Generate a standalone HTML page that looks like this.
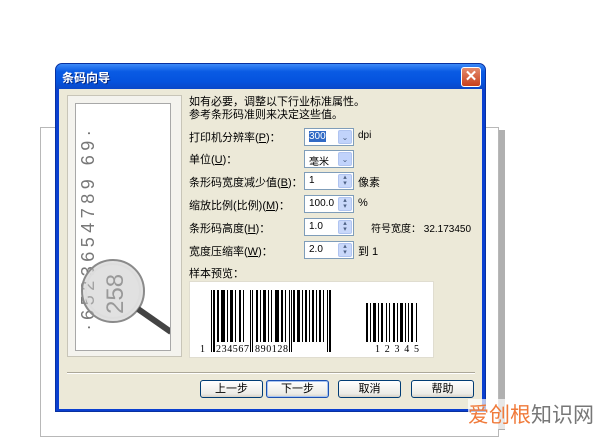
<!DOCTYPE html>
<html><head><meta charset="utf-8"><style>
*{margin:0;padding:0;box-sizing:border-box}
body{width:600px;height:424px;background:#fff;position:relative;overflow:hidden;font-family:"Liberation Sans","Noto Sans CJK SC",sans-serif;font-size:11px;color:#000}
.a{position:absolute}
.bgrect{left:40px;top:127px;width:459px;height:310px;border:1px solid #b8b8b8;background:#fff}
.shadow{left:499px;top:130px;width:6px;height:300px;background:#b0b0b0}
.dlg{left:55px;top:63px;width:431px;height:349px;background:#0a3fd0;border-radius:7px 7px 0 0;border:1px solid #0831a0}
.title{left:0;top:0;width:429px;height:25px;border-radius:6px 6px 0 0;background:linear-gradient(#3d8af7,#0a5be4 30%,#0553de 70%,#0a48c8);color:#fff;font-weight:bold;font-size:12px;padding:5px 0 0 6px;text-shadow:1px 1px #0a2a80}
.close{left:405px;top:3px;width:20px;height:20px;border:1px solid #fff;border-radius:3px;background:linear-gradient(#e48a6c,#c8401c);color:#fff;font-size:15px;line-height:17px;text-align:center;font-weight:bold}
.body{left:3px;top:25px;width:423px;height:320px;background:#ece9d8}
.lbl{position:absolute;font-size:11px;white-space:nowrap}
.inp{position:absolute;left:245px;width:50px;height:18px;border:1px solid #7f9db9;background:#fff;font-size:10px;padding:2px 0 0 4px}
.dd{position:absolute;right:1px;top:1px;width:14px;height:14px;background:#c1d3fb;border:1px solid #b0c4f0;border-radius:2px;color:#4d6185;font-size:8px;text-align:center;line-height:13px}
.sp{position:absolute;right:1px;top:1px;width:14px;height:14px;background:#c9d8fa;border:1px solid #b0c4f0;border-radius:2px;color:#4d6185;font-size:7px;text-align:center;line-height:6px}
.btn{position:absolute;top:291px;width:63px;height:18px;border:1px solid #003c74;border-radius:3px;background:linear-gradient(#fff,#ecebe6 80%,#d6d0c5);text-align:center;font-size:11px;line-height:16px}
</style></head><body>
<div class="a bgrect"></div>
<div class="a shadow"></div>
<div class="a dlg">
 <div class="a title">条码向导</div>
 <div class="a close">✕</div>
 <div class="a body">
  <div class="a" style="left:8px;top:6px;width:115px;height:262px;border:1px solid #c8c5b8;background:#f4f3ee"></div>
  <div class="a" style="left:16px;top:14px;width:96px;height:248px;border:1px solid #a8a8a8;background:#fff;overflow:hidden">
   <div class="a" style="left:-112px;top:113px;width:250px;height:22px;transform:rotate(-90deg);font-size:18px;color:#777;letter-spacing:4.5px;font-family:'Liberation Sans',sans-serif;text-align:center">·6523654789 69·</div>
   <svg class="a" style="left:0;top:0" width="96" height="248">
    <circle cx="37" cy="187" r="31" fill="rgba(200,200,200,0.55)" stroke="#8a8a8a" stroke-width="2"/>
    <circle cx="37" cy="187" r="27" fill="none" stroke="#ddd" stroke-width="2"/>
    <line x1="62" y1="205" x2="95" y2="228" stroke="#444" stroke-width="6"/>
    <text x="47" y="210" transform="rotate(-90 47 210)" font-size="24" fill="#999" font-family="Liberation Sans">258</text>
   </svg>
  </div>
  <div class="lbl" style="left:130px;top:7px;line-height:13px">如有必要，调整以下行业标准属性。<br>参考条形码准则来决定这些值。</div>
  <div class="lbl" style="left:130px;top:40px">打印机分辨率(<u>P</u>)：</div>
  <div class="lbl" style="left:130px;top:62px">单位(<u>U</u>)：</div>
  <div class="lbl" style="left:130px;top:85px">条形码宽度减少值(<u>B</u>)：</div>
  <div class="lbl" style="left:130px;top:108px">缩放比例(比例)(<u>M</u>)：</div>
  <div class="lbl" style="left:130px;top:131px">条形码高度(<u>H</u>)：</div>
  <div class="lbl" style="left:130px;top:154px">宽度压缩率(<u>W</u>)：</div>
  <div class="lbl" style="left:130px;top:176px">样本预览：</div>
  <div class="inp" style="top:39px"><span style="background:#316ac5;color:#fff">300</span><div class="dd">⌄</div></div>
  <div class="lbl" style="left:299px;top:41px;font-size:10px">dpi</div>
  <div class="inp" style="top:61px">毫米<div class="dd">⌄</div></div>
  <div class="inp" style="top:83px">1<div class="sp">▴<br>▾</div></div>
  <div class="lbl" style="left:299px;top:85px">像素</div>
  <div class="inp" style="top:106px">100.0<div class="sp">▴<br>▾</div></div>
  <div class="lbl" style="left:299px;top:108px">%</div>
  <div class="inp" style="top:129px">1.0<div class="sp">▴<br>▾</div></div>
  <div class="lbl" style="left:312px;top:131px;font-size:10px">符号宽度： 32.173450</div>
  <div class="inp" style="top:152px">2.0<div class="sp">▴<br>▾</div></div>
  <div class="lbl" style="left:299px;top:154px">到 1</div>
  <div class="a" style="left:130px;top:192px;width:245px;height:77px;background:#fff;border:1px solid #e0ddd0">
   <svg width="245" height="77">
    <g fill="#000">
     <rect x="21" y="8" width="1" height="62"/><rect x="23" y="8" width="2" height="62"/>
     <rect x="27" y="8" width="2" height="52"/><rect x="31" y="8" width="4" height="52"/><rect x="37" y="8" width="1" height="52"/><rect x="40" y="8" width="3" height="52"/><rect x="45" y="8" width="1" height="52"/><rect x="49" y="8" width="2" height="52"/><rect x="53" y="8" width="1" height="52"/>
     <rect x="60" y="8" width="1" height="62"/><rect x="62" y="8" width="1" height="62"/>
     <rect x="66" y="8" width="2" height="52"/><rect x="70" y="8" width="1" height="52"/><rect x="73" y="8" width="3" height="52"/><rect x="78" y="8" width="1" height="52"/><rect x="81" y="8" width="1" height="52"/><rect x="85" y="8" width="4" height="52"/><rect x="91" y="8" width="2" height="52"/><rect x="95" y="8" width="1" height="52"/>
     <rect x="99" y="8" width="1" height="62"/><rect x="101" y="8" width="1" height="62"/>
     <rect x="103" y="8" width="2" height="52"/><rect x="107" y="8" width="3" height="52"/><rect x="112" y="8" width="1" height="52"/><rect x="115" y="8" width="2" height="52"/><rect x="119" y="8" width="1" height="52"/><rect x="122" y="8" width="2" height="52"/><rect x="126" y="8" width="1" height="52"/><rect x="129" y="8" width="2" height="52"/><rect x="133" y="8" width="1" height="52"/>
     <rect x="137" y="8" width="1" height="62"/><rect x="139" y="8" width="2" height="62"/>
     <rect x="176" y="21" width="2" height="39"/><rect x="180" y="21" width="1" height="39"/><rect x="183" y="21" width="3" height="39"/><rect x="188" y="21" width="1" height="39"/><rect x="191" y="21" width="2" height="39"/><rect x="196" y="21" width="1" height="39"/><rect x="199" y="21" width="1" height="39"/><rect x="203" y="21" width="2" height="39"/><rect x="207" y="21" width="1" height="39"/><rect x="210" y="21" width="3" height="39"/><rect x="215" y="21" width="1" height="39"/><rect x="218" y="21" width="1" height="39"/><rect x="221" y="21" width="2" height="39"/><rect x="226" y="21" width="1" height="39"/>
    </g>
    <g font-family="Liberation Serif" font-size="10" fill="#000">
     <text x="10" y="70">1</text><text x="26" y="70" textLength="33" lengthAdjust="spacing">234567</text><text x="65" y="70" textLength="33" lengthAdjust="spacing">890128</text><text x="185" y="70" textLength="44" lengthAdjust="spacing">12345</text>
    </g>
   </svg>
  </div>
  <div class="a" style="left:8px;top:283px;width:408px;height:2px;border-top:1px solid #aca899;border-bottom:1px solid #fff"></div>
  <div class="btn" style="left:141px">上一步</div>
  <div class="btn" style="left:207px;border-color:#1a4fb0;box-shadow:inset 0 0 0 1px #a8c4f0">下一步</div>
  <div class="btn" style="left:279px">取消</div>
  <div class="btn" style="left:352px">帮助</div>
 </div>
</div>
<div class="a" style="left:468px;top:399px;font-size:21px;white-space:nowrap;background:rgba(255,255,255,0.7)"><span style="color:#f07a3a">爱创根</span><span style="color:#777">知识网</span></div>
</body></html>
